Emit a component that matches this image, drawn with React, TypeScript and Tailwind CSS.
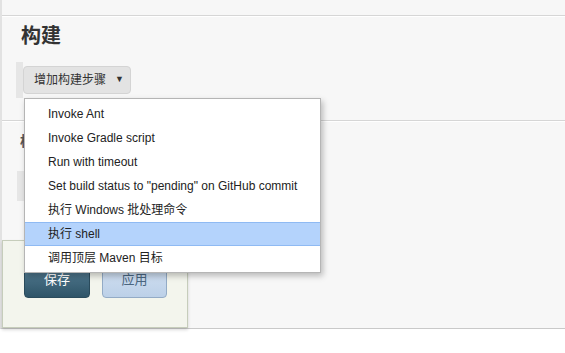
import React from "react";

const items = [
  "Invoke Ant",
  "Invoke Gradle script",
  "Run with timeout",
  'Set build status to "pending" on GitHub commit',
  "执行 Windows 批处理命令",
  "执行 shell",
  "调用顶层 Maven 目标",
];

export default function App() {
  return (
    <div
      className="relative w-[565px] h-[353px] overflow-hidden bg-white text-[#333]"
      style={{ fontFamily: '"Liberation Sans", "Noto Sans CJK SC", sans-serif' }}
    >
      <div className="h-[329px] bg-[#f7f7f7] border-b border-[#c9c9c9] border-l-2 border-l-[#e2e2e2] flex flex-col">
        {/* top strip */}
        <div className="h-[16px] border-b border-[#d6d6d6] shrink-0" />
        {/* 构建 section */}
        <div className="h-[105px] border-t border-t-white border-b border-[#d6d6d6] shrink-0 flex flex-col">
          <div className="pl-[19px] pt-[6px] h-[37px] text-[20px] font-bold leading-[26px] text-[#333]">构建</div>
          <div className="flex items-center mt-[8px] ml-[14px]">
            <div className="w-[7px] h-[36px] bg-[#e6e6e6]" />
            <div className="h-[28px] w-[108px] rounded-[4px] bg-[#e3e3e3] border border-[#d4d4d4] flex items-center pl-[10px] text-[12px] text-[#333]">
              <span>增加构建步骤</span>
              <span className="ml-[9px] text-[9px]">▼</span>
            </div>
          </div>
        </div>
        {/* 构建后操作 section */}
        <div className="flex-1 flex flex-col relative border-t border-t-white">
          <div className="pl-[18px] pt-[9px] text-[14px] font-bold text-[#555]">构建后操作</div>
          <div className="flex items-center mt-[19px] ml-[15px]">
            <div className="w-[7px] h-[30px] bg-[#e6e6e6]" />
            <div className="h-[28px] w-[150px] rounded-[4px] bg-[#e3e3e3] border border-[#d4d4d4]" />
          </div>
          {/* bottom button bar */}
          <div className="mt-auto w-[186px] h-[88px] bg-[#f3f5ed] border border-[#c6cdbb] shadow-[0_2px_3px_rgba(0,0,0,0.15)] flex items-end gap-[12px] pl-[21px] pb-[29px]">
            <div className="w-[66px] h-[36px] rounded-[4px] bg-gradient-to-b from-[#5a8298] to-[#2e5468] border border-[#2a4b5c] text-white text-[13px] flex items-center justify-center">
              保存
            </div>
            <div className="w-[65px] h-[36px] rounded-[4px] bg-gradient-to-b from-[#d4e2f2] to-[#bcd0e8] border border-[#93abc6] text-[#4a6680] text-[13px] flex items-center justify-center">
              应用
            </div>
          </div>
        </div>
      </div>

      {/* dropdown menu */}
      <div className="absolute left-[24px] top-[98px] w-[297px] bg-white border border-[#b5b5b5] shadow-[2px_3px_6px_rgba(0,0,0,0.25)] pt-[3px] pb-[2px]">
        {items.map((t, i) => (
          <div
            key={t}
            className={
              i === 5
                ? "h-[24px] flex items-center pl-[23px] text-[12px] text-[#222] bg-[#b4d3fc] border-y border-[#8fbaf3]"
                : "h-[24px] flex items-center pl-[23px] text-[12px] text-[#222]"
            }
          >
            {t}
          </div>
        ))}
      </div>
    </div>
  );
}
